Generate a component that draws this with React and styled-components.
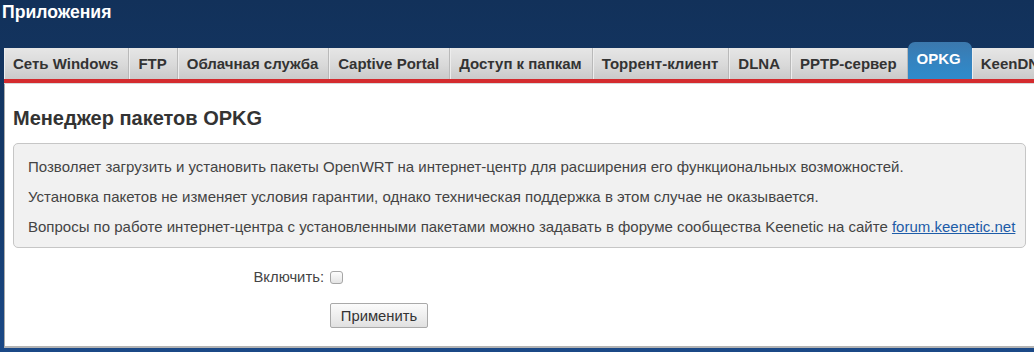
import React from 'react';
import styled, { createGlobalStyle } from 'styled-components';

const GlobalStyle = createGlobalStyle`
  html, body {
    margin: 0;
    padding: 0;
    height: 352px;
    overflow: hidden;
  }
  body {
    font-family: "Liberation Sans", Arial, sans-serif;
    background: linear-gradient(to bottom, #12315a 0%, #153b6c 60%, #1b4987 100%);
  }
`;

const Page = styled.div`
  width: 1034px;
  height: 352px;
  overflow: hidden;
`;

const Header = styled.div`
  height: 42px;
  padding: 1px 0 0 2px;
  box-sizing: border-box;
`;

const Title = styled.h1`
  margin: 0;
  font-size: 17.6px;
  line-height: 22px;
  font-weight: 700;
  color: #fff;
`;

const TabBar = styled.div`
  display: flex;
  align-items: flex-end;
  margin-left: 4px;
  height: 37px;
  border-bottom: 4px solid #d42b2e;
  box-shadow: 0 1px 0 #d9d9d9;
  white-space: nowrap;
`;

const Tab = styled.div`
  flex: none;
  box-sizing: border-box;
  height: ${p => (p.$active ? '37px' : '31px')};
  line-height: ${p => (p.$active ? '33px' : '31px')};
  padding: 0 10px 0 9px;
  font-size: 15px;
  font-weight: 700;
  color: ${p => (p.$active ? '#fff' : '#333')};
  background: ${p =>
    p.$active
      ? 'linear-gradient(to bottom, #3b78ad 0%, #3583bf 50%, #2f8bcb 100%)'
      : 'linear-gradient(to bottom, #e6e6e6 0%, #d9d9d9 55%, #cacaca 100%)'};
  border-right: 1px solid ${p => (p.$active ? 'transparent' : '#b9b9b9')};
  border-radius: ${p => (p.$active ? '7px 7px 0 0' : '0')};
  box-shadow: ${p => (p.$active ? 'none' : 'inset 1px 0 0 #ededed')};
`;

const Panel = styled.div`
  margin-left: 4px;
  margin-top: 1px;
  height: 264px;
  box-sizing: border-box;
  background: #fff;
  border-left: 1px solid #a9a9a9;
  border-bottom: 2px solid #b4b4b4;
  padding: 0 8px;
`;

const Heading = styled.h2`
  margin: 0;
  padding: 22px 0 13px;
  font-size: 20px;
  line-height: 24px;
  font-weight: 700;
  color: #333;
`;

const InfoBox = styled.div`
  width: 1013px;
  box-sizing: border-box;
  background: #f1f1f1;
  border: 1px solid #c6c6c6;
  border-radius: 5px;
  padding: 3px 14px 0;
`;

const Para = styled.p`
  margin: 10px 0;
  font-size: 15px;
  line-height: 20px;
  color: #444;
  white-space: nowrap;
`;

const Link = styled.a`
  color: #1d5ca8;
  text-decoration: underline;
`;

const Form = styled.div`
  display: grid;
  grid-template-columns: 311px auto;
  column-gap: 6px;
  row-gap: 16px;
  align-items: center;
  justify-items: start;
  padding-top: 19px;
`;

const Label = styled.label`
  justify-self: end;
  font-size: 14.8px;
  line-height: 20px;
  color: #444;
`;

const Check = styled.input`
  appearance: none;
  margin: 0;
  width: 13px;
  height: 13px;
  border: 1px solid #a6a6a6;
  border-radius: 3px;
  background: linear-gradient(to bottom, #fdfdfd, #e4e4e4);
  box-sizing: border-box;
`;

const Button = styled.button`
  grid-column: 2;
  width: 98px;
  height: 25px;
  padding: 0;
  font-family: "Liberation Sans", Arial, sans-serif;
  font-size: 14.8px;
  color: #333;
  background: linear-gradient(to bottom, #fbfbfb 0%, #ececec 60%, #e0e0e0 100%);
  border: 1px solid #a9a9a9;
  border-radius: 2px;
`;

const tabs = [
  'Сеть Windows',
  'FTP',
  'Облачная служба',
  'Captive Portal',
  'Доступ к папкам',
  'Торрент-клиент',
  'DLNA',
  'PPTP-сервер',
  'OPKG',
  'KeenDNS',
];

export default function App() {
  return (
    <Page>
      <GlobalStyle />
      <Header>
        <Title>Приложения</Title>
      </Header>
      <TabBar>
        {tabs.map(t => (
          <Tab key={t} $active={t === 'OPKG'}>{t}</Tab>
        ))}
      </TabBar>
      <Panel>
        <Heading>Менеджер пакетов OPKG</Heading>
        <InfoBox>
          <Para>Позволяет загрузить и установить пакеты OpenWRT на интернет-центр для расширения его функциональных возможностей.</Para>
          <Para>Установка пакетов не изменяет условия гарантии, однако техническая поддержка в этом случае не оказывается.</Para>
          <Para>
            Вопросы по работе интернет-центра с установленными пакетами можно задавать в форуме сообщества Keenetic на сайте{' '}
            <Link href="#">forum.keenetic.net</Link>
          </Para>
        </InfoBox>
        <Form>
          <Label htmlFor="opkg-enable">Включить:</Label>
          <Check type="checkbox" id="opkg-enable" />
          <Button>Применить</Button>
        </Form>
      </Panel>
    </Page>
  );
}
